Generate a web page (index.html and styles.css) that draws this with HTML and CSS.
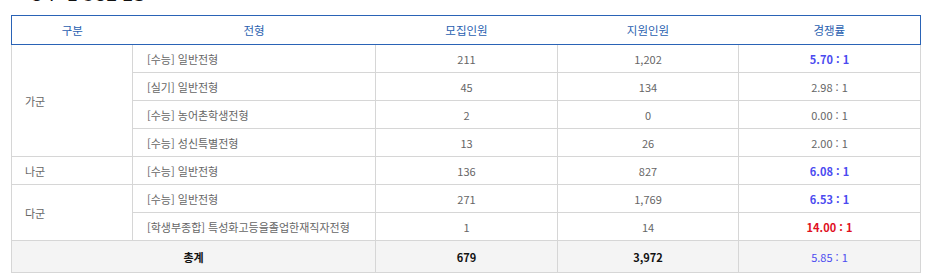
FILE: index.html
```html
<!DOCTYPE html>
<html lang="ko">
<head>
<meta charset="utf-8">
<link rel="stylesheet" href="styles.css">
</head>
<body>
<div class="wrap">
  <h2 class="title">정시모집 경쟁률 현황</h2>
  <table class="rate">
    <colgroup>
      <col class="c1"><col class="c2"><col class="c3"><col class="c4"><col class="c5">
    </colgroup>
    <thead>
      <tr><th>구분</th><th>전형</th><th>모집인원</th><th>지원인원</th><th>경쟁률</th></tr>
    </thead>
    <tbody>
      <tr><td class="grp" rowspan="4">가군</td><td class="type">[수능] 일반전형</td><td>211</td><td>1,202</td><td class="hi">5.70 : 1</td></tr>
      <tr><td class="type">[실기] 일반전형</td><td>45</td><td>134</td><td>2.98 : 1</td></tr>
      <tr><td class="type">[수능] 농어촌학생전형</td><td>2</td><td>0</td><td>0.00 : 1</td></tr>
      <tr><td class="type">[수능] 성신특별전형</td><td>13</td><td>26</td><td>2.00 : 1</td></tr>
      <tr><td class="grp">나군</td><td class="type">[수능] 일반전형</td><td>136</td><td>827</td><td class="hi">6.08 : 1</td></tr>
      <tr><td class="grp" rowspan="2">다군</td><td class="type">[수능] 일반전형</td><td>271</td><td>1,769</td><td class="hi">6.53 : 1</td></tr>
      <tr><td class="type">[학생부종합] 특성화고등을졸업한재직자전형</td><td>1</td><td>14</td><td class="top">14.00 : 1</td></tr>
      <tr class="total"><td colspan="2" class="b">총계</td><td class="b">679</td><td class="b">3,972</td><td class="sum">5.85 : 1</td></tr>
    </tbody>
  </table>
</div>
</body>
</html>
```

FILE: styles.css
```css
html, body {
  margin: 0;
  padding: 0;
  background: #fff;
}
body {
  font-family: "Noto Sans CJK KR", "Noto Sans", sans-serif;
  color: #666;
}
.wrap {
  padding-left: 11px;
  overflow: hidden;
  height: 280px;
}
.title {
  margin: -13px 0 0 19px;
  font-size: 13px;
  line-height: 14px;
  height: 14px;
  font-weight: bold;
  color: #111;
}
.rate {
  margin-top: 14px;
  width: 909px;
  border-collapse: collapse;
  table-layout: fixed;
  font-size: 11px;
}
.c1 { width: 121px; }
.c2 { width: 243px; }
.c3 { width: 182px; }
.c4 { width: 181px; }
.c5 { width: 182px; }
.rate th {
  height: 28px;
  padding: 0;
  border: 1px solid #2a63b6;
  border-left: 0;
  border-right: 0;
  color: #2a5fb0;
  font-weight: normal;
  font-size: 11.5px;
  text-align: center;
}
.rate th:first-child { border-left: 1px solid #2a63b6; }
.rate th:last-child { border-right: 1px solid #2a63b6; }
.rate td {
  height: 27px;
  padding: 0;
  border: 1px solid #d6d6d6;
  text-align: center;
  color: #666;
}
.rate td.grp {
  text-align: left;
  padding-left: 13px;
}
.rate td.type {
  text-align: left;
  padding-left: 14px;
}
.rate td.hi {
  color: #4b4bf0;
  font-weight: bold;
}
.rate td.top {
  color: #e0101e;
  font-weight: bold;
}
.rate tr.total td {
  height: 31px;
  background: #f4f4f4;
}
.rate tr.total td.b {
  color: #111;
  font-weight: bold;
}
.rate tr.total td.sum {
  color: #4b4bf0;
}
```
